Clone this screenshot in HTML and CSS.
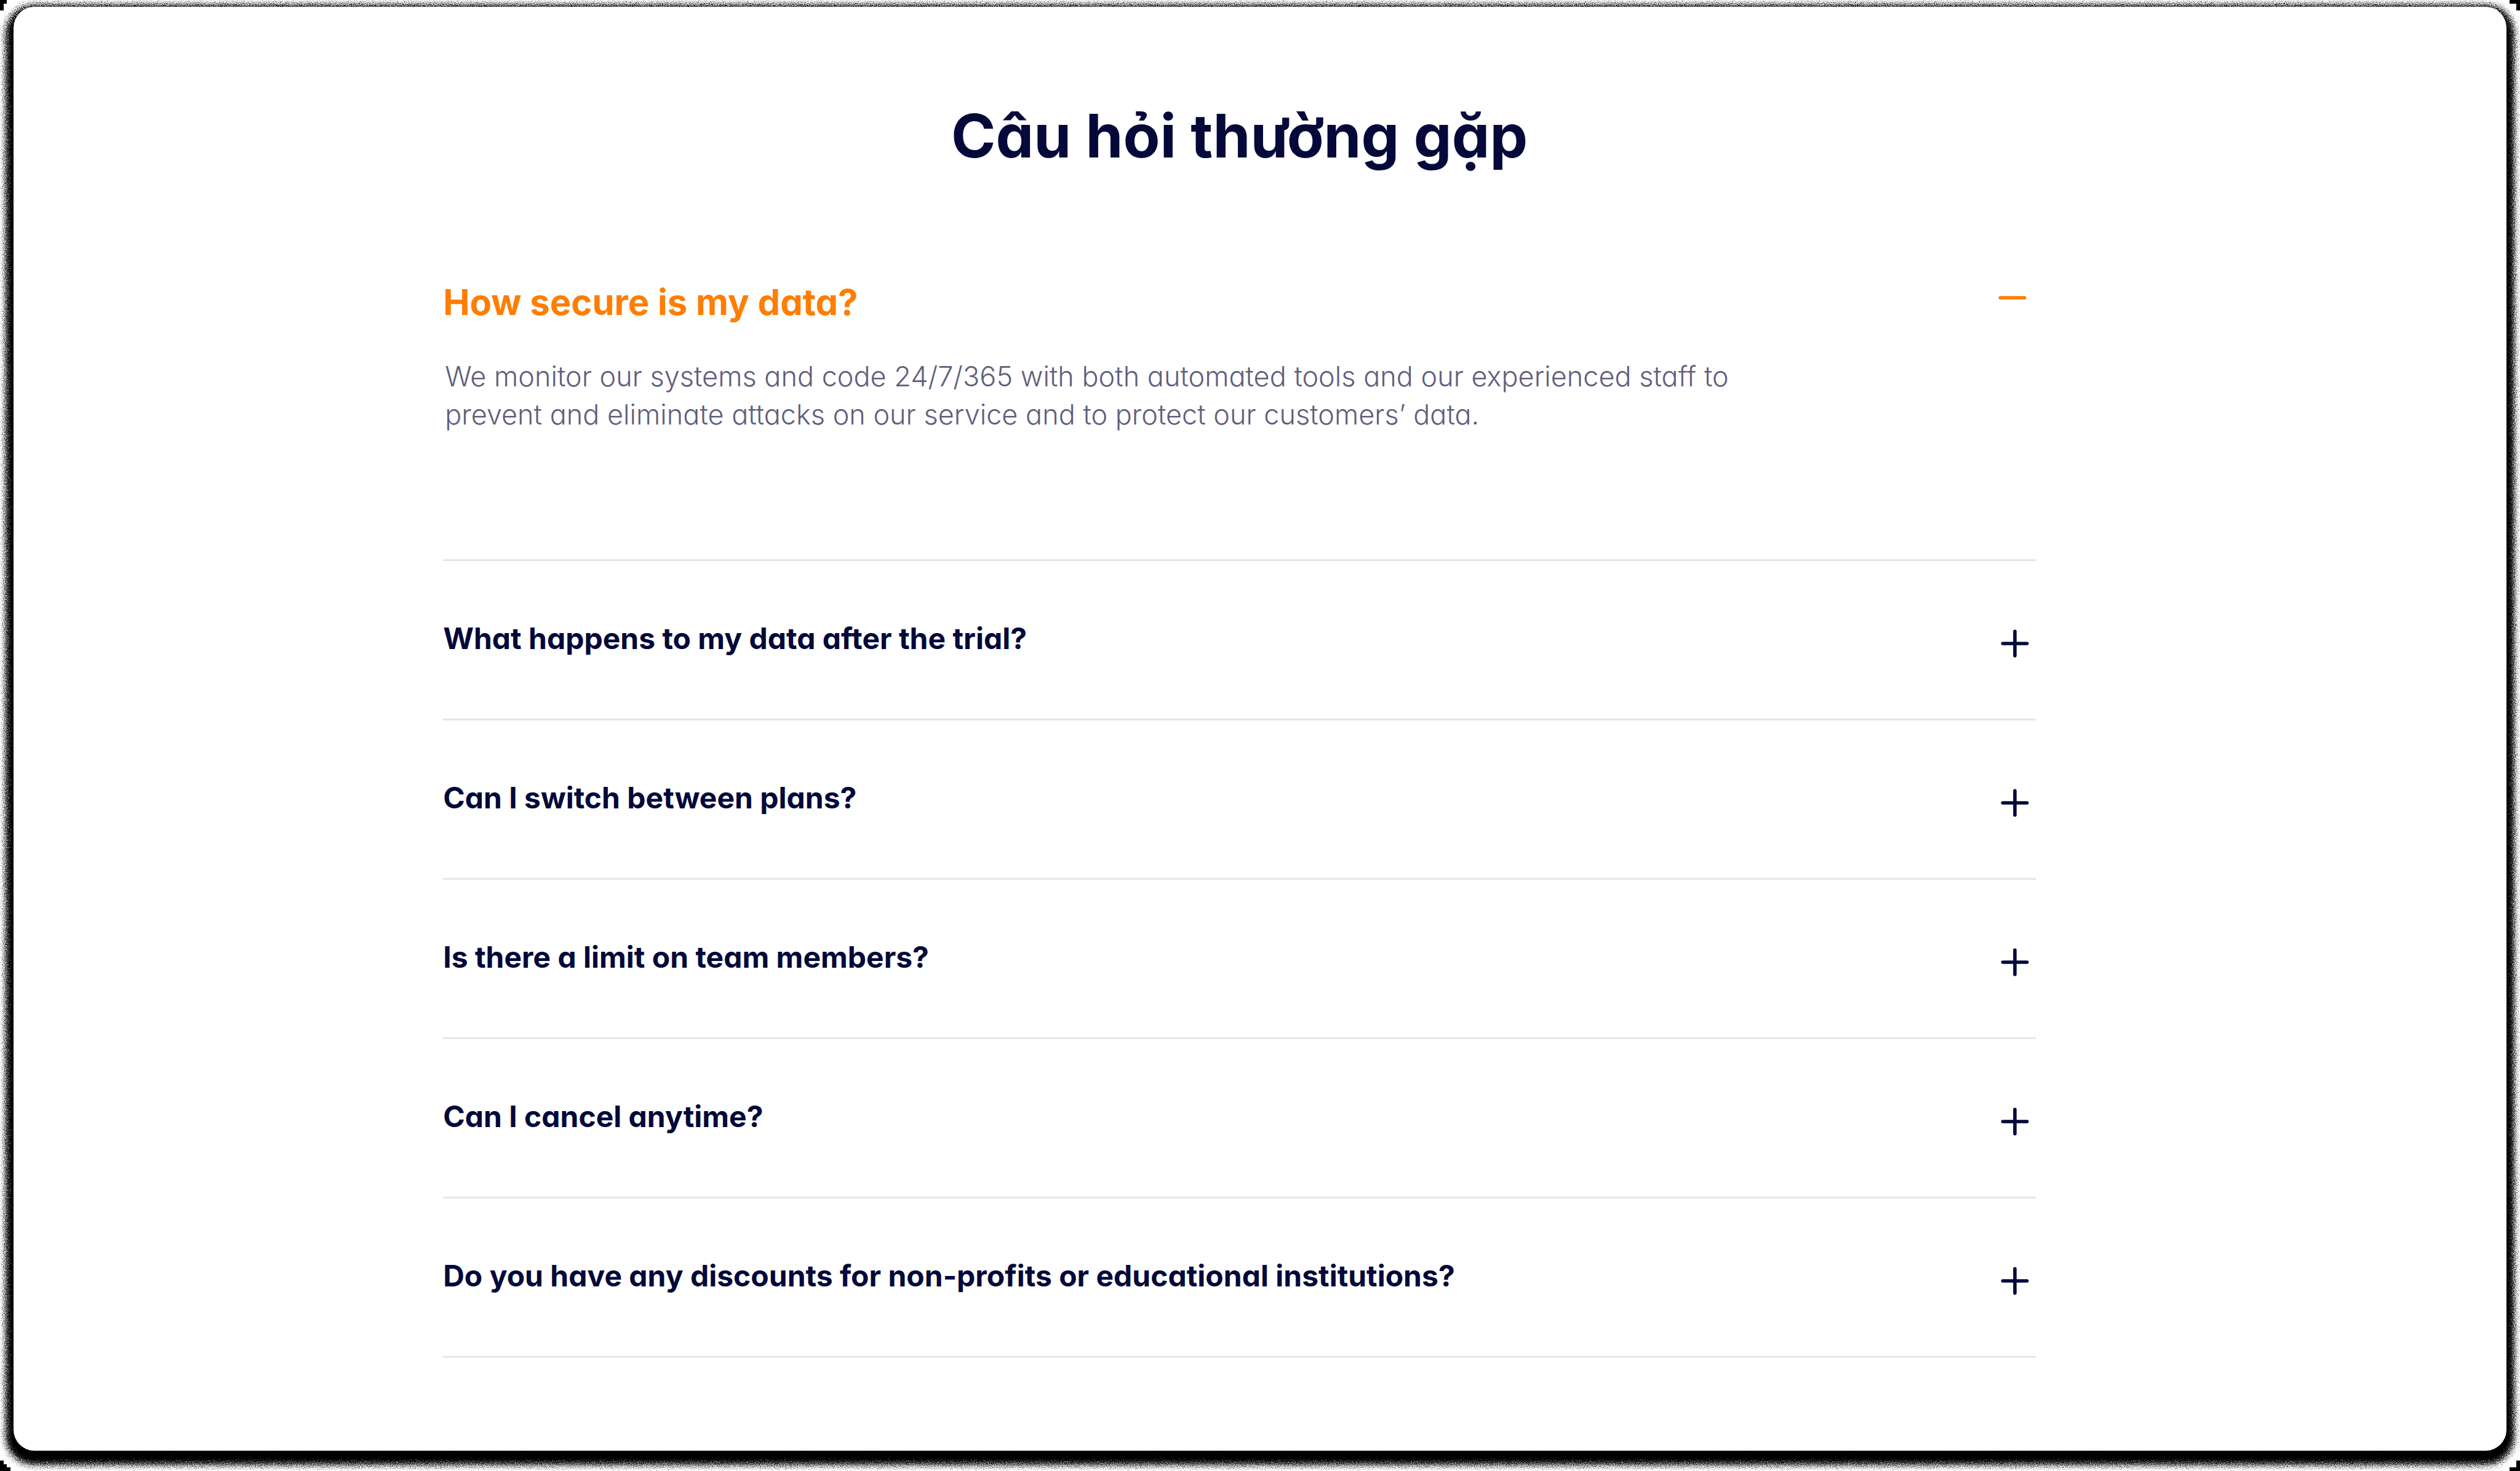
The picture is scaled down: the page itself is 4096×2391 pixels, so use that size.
FILE: index.html
```html
<!DOCTYPE html>
<html lang="vi">
<head>
<meta charset="utf-8">
<meta name="viewport" content="width=device-width, initial-scale=1">
<title>Câu hỏi thường gặp</title>
<link rel="stylesheet" href="styles.css">
</head>
<body>
<svg class="defs" width="0" height="0" aria-hidden="true">
  <filter id="grain" x="-2%" y="-2%" width="104%" height="104%">
    <feTurbulence type="fractalNoise" baseFrequency="0.9" numOctaves="2" seed="4" result="noise"/>
    <feDisplacementMap in="SourceGraphic" in2="noise" scale="26" xChannelSelector="R" yChannelSelector="G"/>
  </filter>
  <symbol id="plus" viewBox="0 0 64 64">
    <path d="M12.300 32H51.700M32 12.300V51.700" fill="none" stroke="currentColor" stroke-width="5.600" stroke-linecap="round"/>
  </symbol>
  <symbol id="minus" viewBox="0 0 64 64">
    <path d="M12.300 33H51.700" fill="none" stroke="currentColor" stroke-width="5.600" stroke-linecap="round"/>
  </symbol>
</svg>
<main class="card">
  <h1 class="title">Câu hỏi thường gặp</h1>
  <section class="item item-open">
    <h2 class="heading"><button class="question" type="button" aria-expanded="true" aria-controls="answer-1"><span>How secure is my data?</span><svg class="icon" aria-hidden="true"><use href="#minus"/></svg></button></h2>
    <p class="answer" id="answer-1">We monitor our systems and code 24/7/365 with both automated tools and our experienced staff to<br>prevent and eliminate attacks on our service and to protect our customers’ data.</p>
  </section>
  <section class="item">
    <h2 class="heading"><button class="question" type="button" aria-expanded="false"><span>What happens to my data after the trial?</span><svg class="icon" aria-hidden="true"><use href="#plus"/></svg></button></h2>
  </section>
  <section class="item">
    <h2 class="heading"><button class="question" type="button" aria-expanded="false"><span>Can I switch between plans?</span><svg class="icon" aria-hidden="true"><use href="#plus"/></svg></button></h2>
  </section>
  <section class="item">
    <h2 class="heading"><button class="question" type="button" aria-expanded="false"><span>Is there a limit on team members?</span><svg class="icon" aria-hidden="true"><use href="#plus"/></svg></button></h2>
  </section>
  <section class="item">
    <h2 class="heading"><button class="question" type="button" aria-expanded="false"><span>Can I cancel anytime?</span><svg class="icon" aria-hidden="true"><use href="#plus"/></svg></button></h2>
  </section>
  <section class="item">
    <h2 class="heading"><button class="question" type="button" aria-expanded="false"><span>Do you have any discounts for non-profits or educational institutions?</span><svg class="icon" aria-hidden="true"><use href="#plus"/></svg></button></h2>
  </section>
</main>
</body>
</html>
```
FILE: styles.css
```css
:root {
  --navy: #04093a;
  --orange: #ff7d00;
  --muted: #5f5f7e;
  --rule: #e6e6e6;
}

* {
  box-sizing: border-box;
}

html {
  background: #fff;
}

body {
  margin: 0;
  padding: 11px 22px 33px;
  min-height: 100vh;
  overflow: hidden;
  color: var(--navy);
  font-family: Inter, "Open Sans", sans-serif;
  font-feature-settings: "cv11";
  /* small black notches in the four corners */
  background:
    linear-gradient(#000, #000) left top / 11px 6px no-repeat,
    linear-gradient(#000, #000) left top / 6px 17px no-repeat,
    linear-gradient(#000, #000) right top / 17px 6px no-repeat,
    linear-gradient(#000, #000) right top / 6px 17px no-repeat,
    linear-gradient(#000, #000) left bottom / 6px 17px no-repeat,
    linear-gradient(#000, #000) left bottom / 11px 11px no-repeat,
    linear-gradient(#000, #000) left bottom / 17px 6px no-repeat,
    linear-gradient(#000, #000) right bottom / 17px 6px no-repeat,
    linear-gradient(#000, #000) right bottom / 6px 17px no-repeat,
    #fff;
}

.defs {
  position: absolute;
}

.card {
  position: relative;
  z-index: 0;
  min-height: calc(100vh - 44px);
  padding: 150px 18.88% 0 17.23%;
  border-radius: 34px;
}

/* grainy shadow, then the white sheet over it */
.card::before,
.card::after {
  content: "";
  position: absolute;
  inset: 0;
  z-index: -2;
  border-radius: 34px;
  background: #000;
  box-shadow: 0 10px 8px 13px #000;
  filter: url(#grain);
}

.card::after {
  z-index: -1;
  background: #fff;
  box-shadow: none;
  filter: none;
}

.title {
  margin: 0 0 170px;
  font-size: 98px;
  font-weight: 700;
  line-height: 120px;
  text-align: center;
}

.item {
  border-bottom: 3px solid var(--rule);
}

.heading {
  margin: 0;
  font-size: 48px;
  font-weight: 700;
  line-height: 80px;
}

.question {
  display: flex;
  justify-content: space-between;
  align-items: flex-end;
  width: 100%;
  padding: 86px 2px 90px 0;
  border: 0;
  background: none;
  color: inherit;
  font: inherit;
  font-feature-settings: inherit;
  text-align: left;
  cursor: pointer;
}

.icon {
  flex: none;
  width: 64px;
  height: 64px;
}

.item-open {
  padding-bottom: 204px;
}

.item-open .heading {
  color: var(--orange);
  font-size: 58px;
}

.item-open .question {
  align-items: flex-start;
  padding: 0 6px 0 0;
}

.answer {
  margin: 50px 0 0;
  padding-left: 3px;
  color: var(--muted);
  font-size: 45px;
  font-weight: 300;
  line-height: 62px;
}
```
